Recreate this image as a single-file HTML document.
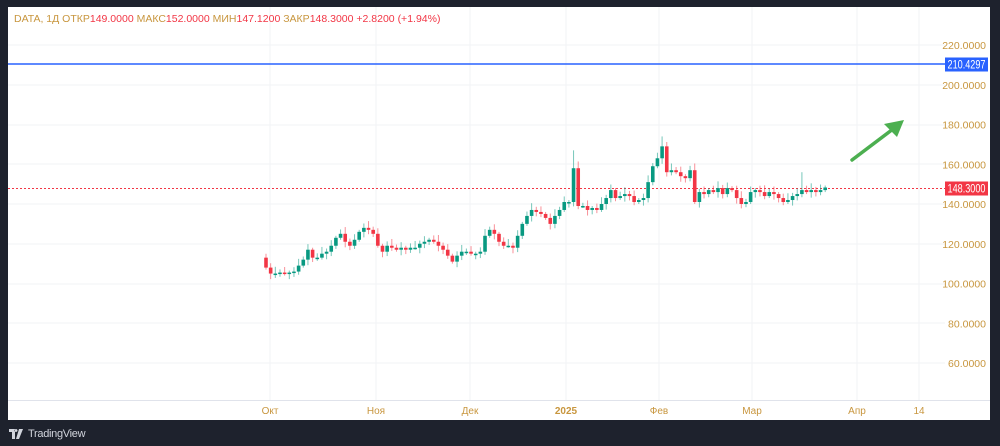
<!DOCTYPE html>
<html><head><meta charset="utf-8"><style>
body{margin:0;background:#1e222d;width:1000px;height:446px;overflow:hidden;font-family:"Liberation Sans","DejaVu Sans",sans-serif}
#c{position:absolute;left:8px;top:7px;width:982px;height:413px;background:#fff}
svg{position:absolute;left:0;top:0}
</style></head><body>
<div id="c"></div>
<svg id="s" width="1000" height="446" viewBox="0 0 1000 446"></svg>
<div style="position:absolute;left:9px;top:428px;color:#d1d4dc;font-size:11px;display:flex;align-items:center;gap:4px"><svg width="15" height="10" viewBox="0 0 15 10" style="position:static"><path d="M0 0h6v10H3V3H0z M7 0a1.5 1.5 0 1 0 0.01 0z M10 0h4l-4 10H7z" fill="#d1d4dc"/></svg><span style="letter-spacing:-0.3px">TradingView</span></div>
<script>
var s=document.getElementById('s'),h='';
function Y(p){return 45+(220-p)*1.9875}
[45,85,125,164,204,244,284,323,363].forEach(function(y){h+='<line x1="8" x2="945" y1="'+y+'" y2="'+y+'" stroke="#f2f3f5"/>'});
[270,376,470,566,659,752,857,919].forEach(function(x){h+='<line x1="'+x+'" x2="'+x+'" y1="7" y2="400" stroke="#f2f3f5"/>'});
h+='<line x1="8" x2="990" y1="400.5" y2="400.5" stroke="#e0e3eb"/>';
[220,200,180,160,140,120,100,80,60].forEach(function(p){h+='<text x="986" y="'+(Y(p)+4)+'" text-anchor="end" font-size="10.5" fill="#c8963e">'+p+'.0000</text>'});
[['Окт',270],['Ноя',376],['Дек',470],['2025',566],['Фев',659],['Мар',752],['Апр',857],['14',919]].forEach(function(t){h+='<text x="'+t[1]+'" y="414" text-anchor="middle" font-size="10" fill="#c8963e"'+(t[0]=='2025'?' font-weight="bold"':'')+'>'+t[0]+'</text>'});
h+='<line x1="8" x2="945" y1="64" y2="64" stroke="#2962ff" stroke-width="1.5"/>';
h+='<rect x="945" y="57.5" width="43" height="14" fill="#2962ff"/><text x="947.5" y="68.5" font-size="11.5" fill="#fff" textLength="38" lengthAdjust="spacingAndGlyphs">210.4297</text>';
var py=Math.round(Y(148.3))+0.5;
h+='<line x1="8" x2="945" y1="'+py+'" y2="'+py+'" stroke="#f23645" stroke-dasharray="2 2"/>';
h+='<rect x="945" y="'+(py-7)+'" width="43" height="14" fill="#f23645"/><text x="947.5" y="'+(py+4)+'" font-size="11.5" fill="#fff" textLength="38" lengthAdjust="spacingAndGlyphs">148.3000</text>';
var c=[108,105,105,105.5,105,105.5,106,109,112,117,113,113,115,116,119,123,125,121,119,122,126,128,127,125,119,116,119,118,117,118,117,118,118,120,121,122,121,119,117,114,111,114,116,116,115,115,116,124,127,125,121,119,119,118,124,130,134,137,136,135,133,130,134,137,141,141,158,139,139,137,138,137,140,143,147,143,144,145,144,141,142,143,151,159,163,169,156,157,156,154,153,157,141,146,145,147,146,148,145,148,147,143,140,141,146,147,146,144,146,145,143,141,142,144,145,147,146,147,146,147,148.3];
var o=113;
for(var i=0;i<c.length;i++){var x=266+i*4.66,cl=c[i],up=cl>=o,col=up?'#089981':'#f23645';
var hi=Math.max(o,cl)+1+((i*7)%5)*0.6,lo=Math.min(o,cl)-1-((i*3)%4)*0.6;
if(i==66)hi=167;if(i==85)hi=174;if(i==0)hi=115;if(i==115)hi=156;
var t=Y(Math.max(o,cl)),b=Y(Math.min(o,cl));if(b-t<1.5)b=t+1.5;
h+='<line x1="'+x+'" x2="'+x+'" y1="'+Y(hi)+'" y2="'+Y(lo)+'" stroke="'+col+'" stroke-opacity="0.55"/>';
h+='<rect x="'+(x-1.8)+'" y="'+t+'" width="3.6" height="'+(b-t)+'" fill="'+col+'"/>';o=cl;}
h+='<path d="M852 160 L893 129" stroke="#4caf50" stroke-width="3.5" stroke-linecap="round"/><path d="M904 120 L884 124 L897 137 Z" fill="#4caf50"/>';
h+='<text x="14" y="22" font-size="10.5"><tspan fill="#c8963e">DATA, 1Д  ОТКР</tspan><tspan fill="#f23645">149.0000</tspan><tspan fill="#c8963e">  МАКС</tspan><tspan fill="#f23645">152.0000</tspan><tspan fill="#c8963e">  МИН</tspan><tspan fill="#f23645">147.1200</tspan><tspan fill="#c8963e">  ЗАКР</tspan><tspan fill="#f23645">148.3000  +2.8200 (+1.94%)</tspan></text>';
s.innerHTML=h;
</script>
</body></html>
